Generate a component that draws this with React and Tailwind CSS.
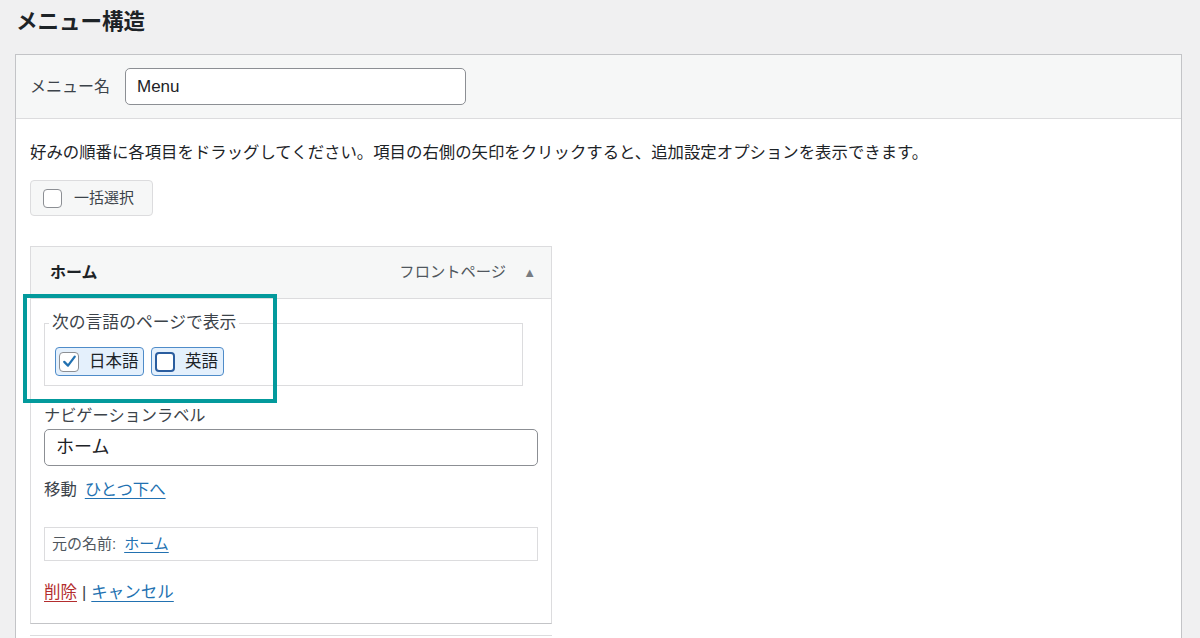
import React from "react";

const F = { fontFamily: '"Liberation Sans", "Noto Sans CJK JP", sans-serif' };

function Check({ checked, focus }) {
  return (
    <span
      className={
        "inline-flex items-center justify-center w-[20px] h-[20px] rounded-[4px] bg-white " +
        (focus ? "border-2 border-[#2a5d9f]" : "border border-[#8c8f94]")
      }
    >
      {checked && (
        <svg width="15" height="15" viewBox="0 0 20 20">
          <path d="M3 10.5 L8 15.5 L17 3.5" fill="none" stroke="#2271b1" strokeWidth="3" strokeLinecap="round" strokeLinejoin="round" />
        </svg>
      )}
    </span>
  );
}

export default function App() {
  return (
    <div className="relative w-[1200px] h-[638px] overflow-hidden bg-[#f0f0f1] text-[#1d2327]" style={F}>
      <h2 className="h-[54px] pl-[16px] pt-[7px] text-[21.5px] font-bold leading-[30px] text-[#1d2327]">メニュー構造</h2>
      <div className="ml-[15px] w-[1167px] h-[600px] border border-[#c3c4c7] bg-white">
        <div className="h-[64px] bg-[#f6f7f7] border-b border-[#dcdcde] flex items-center pl-[14px]">
          <span className="text-[16px] text-[#3c434a] w-[95px]">メニュー名</span>
          <div className="w-[341px] h-[37px] border border-[#8c8f94] rounded-[5px] bg-white flex items-center pl-[11px] text-[17px] text-[#1d2327]">Menu</div>
        </div>
        <div className="pl-[14px]">
          <p className="pt-[21px] text-[16.4px] leading-[24px] text-[#1d2327] whitespace-nowrap">
            好みの順番に各項目をドラッグしてください。項目の右側の矢印をクリックすると、追加設定オプションを表示できます。
          </p>
          <div className="mt-[16px] w-[123px] h-[36px] border border-[#dcdcde] rounded-[4px] bg-[#f6f7f7] flex items-center pl-[12px] gap-[12px]">
            <span className="w-[19px] h-[19px] rounded-[4px] border border-[#8c8f94] bg-white"></span>
            <span className="text-[15px] text-[#3c434a]">一括選択</span>
          </div>
          <div className="mt-[30px] w-[522px]">
            <div className="h-[53px] border border-[#dcdcde] bg-[#f6f7f7] flex items-center pl-[19px] pr-[15px]">
              <span className="text-[16px] font-bold text-[#1d2327]">ホーム</span>
              <span className="ml-auto text-[15.3px] text-[#50575e]">フロントページ</span>
              <span className="ml-[17px] text-[13px] text-[#787c82]">▲</span>
            </div>
            <div className="border-x border-b border-[#c3c4c7] border-x-[#dcdcde] pl-[13px] pr-[13px] pt-[12px] pb-[19px]">
              <fieldset className="w-[479px] border border-[#dcdcde] pl-[10px] pb-[9px]">
                <legend className="ml-[-6px] px-[3px] text-[16.8px] leading-[24px] text-[#3c434a]">次の言語のページで表示</legend>
                <div className="flex gap-[7px] mt-[12px]">
                  <label className="h-[29px] w-[89px] flex items-center gap-[10px] pl-[3px] rounded-[4px] border border-[#4f8cc9] bg-[#e4f0fc]">
                    <Check checked />
                    <span className="text-[16.5px] text-[#1d2327]">日本語</span>
                  </label>
                  <label className="h-[29px] w-[73px] flex items-center gap-[10px] pl-[3px] rounded-[4px] border border-[#4f8cc9] bg-[#e4f0fc]">
                    <Check focus />
                    <span className="text-[16.5px] text-[#1d2327]">英語</span>
                  </label>
                </div>
              </fieldset>
              <div className="mt-[17px] text-[16.2px] leading-[24px] text-[#3c434a]">ナビゲーションラベル</div>
              <div className="mt-[2px] w-[494px] h-[37px] border border-[#8c8f94] rounded-[5px] bg-white flex items-center pl-[11px] text-[18px] text-[#1d2327]">ホーム</div>
              <div className="mt-[11px] text-[16.4px] leading-[24px] text-[#3c434a]">
                移動<a className="ml-[8px] text-[#2271b1] underline underline-offset-[3px]">ひとつ下へ</a>
              </div>
              <div className="mt-[26px] w-[494px] h-[34px] border border-[#dcdcde] flex items-center pl-[7px] text-[15px] text-[#50575e]">
                元の名前:<a className="ml-[8px] text-[#2271b1] underline underline-offset-[3px]">ホーム</a>
              </div>
              <div className="mt-[19px] text-[16.5px] leading-[24px] text-[#3c434a]">
                <a className="text-[#b32d2e] underline underline-offset-[3px]">削除</a>
                <span className="mx-[5px]">|</span>
                <a className="text-[#2271b1] underline underline-offset-[3px]">キャンセル</a>
              </div>
            </div>
            <div className="mt-[11px] h-[2px] border-t border-[#dcdcde]"></div>
          </div>
        </div>
      </div>
      <div className="absolute left-[23px] top-[294px] w-[254px] h-[109px] border-4 border-[#039a9c]"></div>
    </div>
  );
}
